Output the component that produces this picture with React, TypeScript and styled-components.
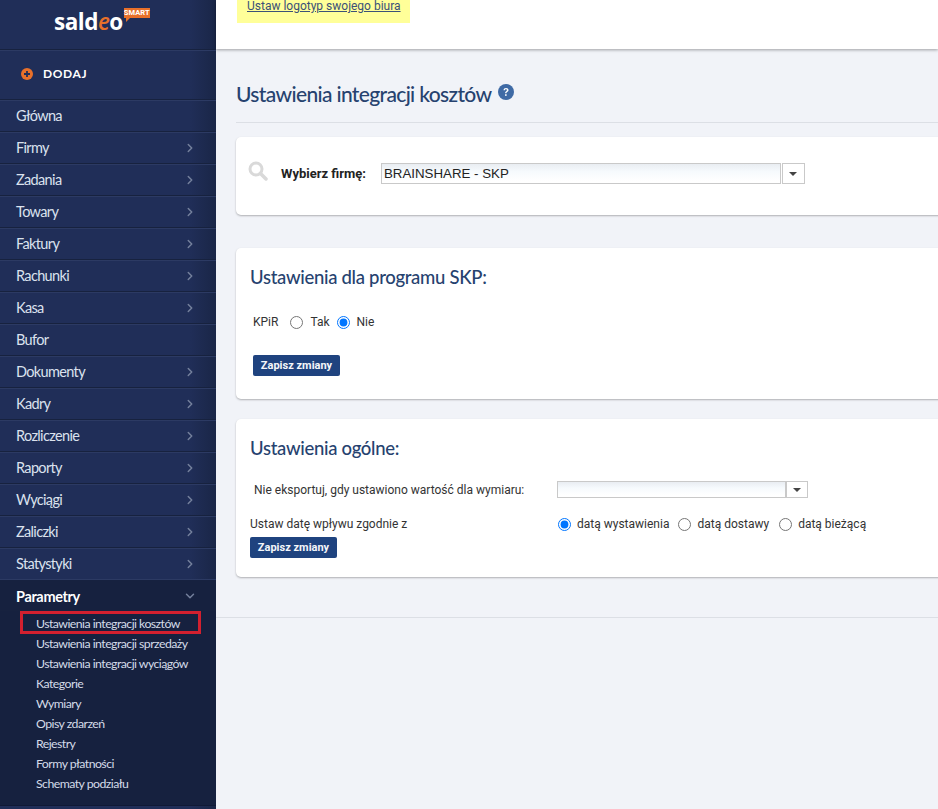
import React from 'react';
import styled, { createGlobalStyle } from 'styled-components';
import { ChevronRight, ChevronDown } from 'lucide-react';

const GlobalStyle = createGlobalStyle`
  html, body {
    margin: 0;
    padding: 0;
    height: 100%;
    overflow: hidden;
    background: #f1f3f8;
  }
  * { box-sizing: border-box; }
`;

const Page = styled.div`
  display: flex;
  width: 938px;
  height: 809px;
  overflow: hidden;
  font-family: Roboto, "Liberation Sans", sans-serif;
`;

const Sidebar = styled.aside`
  flex: 0 0 216px;
  height: 809px;
  display: flex;
  flex-direction: column;
  background: linear-gradient(90deg, #202e58 0%, #202e58 88%, #1a2647 100%);
  color: #dfe5ef;
  font-family: Lato, "Open Sans", sans-serif;
`;

const LogoBar = styled.div`
  height: 50px;
  flex: none;
  display: flex;
  padding: 9px 0 0 54px;
  border-bottom: 1px solid #17223f;
  box-shadow: 0 1px 0 #2c3a63;
`;

const Logo = styled.div`
  display: flex;
  align-items: flex-start;
  font-family: "Open Sans", sans-serif;
  font-weight: 700;
  font-size: 22.5px;
  line-height: 26px;
  letter-spacing: -0.5px;
  color: #fff;
`;

const LogoE = styled.span`
  color: #e8702a;
  font-style: italic;
  font-weight: 600;
`;

const SmartBadge = styled.span`
  position: relative;
  margin: -1px 0 0 1px;
  width: 26px;
  height: 10px;
  background: #e8702a;
  color: #fff;
  font-family: Roboto, sans-serif;
  font-size: 7.5px;
  font-weight: 700;
  line-height: 10px;
  text-align: center;
  letter-spacing: 0.1px;
  &::after {
    content: '';
    position: absolute;
    left: 2px;
    top: 10px;
    border-top: 4px solid #e8702a;
    border-right: 4px solid transparent;
  }
`;

const AddRow = styled.div`
  height: 50px;
  flex: none;
  display: flex;
  align-items: center;
  gap: 10px;
  padding: 0 0 2px 21px;
  border-bottom: 1px solid #17223f;
  color: #fff;
  font-family: Lato, sans-serif;
  font-size: 12px;
  font-weight: 700;
  letter-spacing: 0.6px;
`;

const MenuRow = styled.div<{ $open?: boolean }>`
  height: 32px;
  flex: none;
  display: flex;
  align-items: center;
  justify-content: space-between;
  padding: ${(p) => (p.$open ? '2px 19px 0 16px' : '0 19px 1px 16px')};
  border-top: 1px solid #2c3a63;
  border-bottom: 1px solid #17223f;
  font-size: 14.5px;
  letter-spacing: ${(p) => (p.$open ? '-0.35px' : '-0.65px')};
  color: ${(p) => (p.$open ? '#ffffff' : '#dbe2ee')};
  font-weight: ${(p) => (p.$open ? 700 : 400)};
  svg { color: #74809c; }
`;

const OpenSection = styled.div`
  height: 227px;
  flex: none;
  display: flex;
  flex-direction: column;
  background: #16213f;
  margin-top: -1px;
  border-bottom: 1px solid #111a36;
`;

const SubList = styled.ul`
  list-style: none;
  margin: 2px 0 0;
  padding: 0;
`;

const SubItem = styled.li<{ $active?: boolean }>`
  height: ${(p) => (p.$active ? '23px' : '20px')};
  margin: ${(p) => (p.$active ? '-2px' : '0')} 0 0 20px;
  width: 181px;
  padding-left: ${(p) => (p.$active ? '13px' : '16px')};
  border: ${(p) => (p.$active ? '3px solid #d2202f' : 'none')};
  line-height: ${(p) => (p.$active ? '19px' : '20px')};
  font-size: 12.3px;
  letter-spacing: -0.55px;
  white-space: nowrap;
  color: #d4dbe8;
`;

const Main = styled.main`
  flex: 1;
  min-width: 0;
  display: flex;
  flex-direction: column;
  background: #f1f3f8;
`;

const TopBar = styled.header`
  height: 49px;
  flex: none;
  padding-left: 21px;
  background: #fff;
  box-shadow: 0 1px 3px rgba(0, 0, 0, 0.35);
`;

const LogoLink = styled.a`
  display: block;
  width: 173px;
  height: 23px;
  padding-left: 10px;
  background: #ffff99;
  color: #3b5178;
  font-size: 12px;
  line-height: 12px;
  text-decoration: underline;
  white-space: nowrap;
`;

const Content = styled.div`
  padding: 30px 0 0 20px;
  height: 569px;
  border-bottom: 1px solid #dcdfe5;
  flex: none;
`;

const Title = styled.h1`
  display: flex;
  align-items: center;
  gap: 7px;
  height: 44px;
  margin: 0 0 14px;
  padding-bottom: 14px;
  border-bottom: 1px solid #dcdfe5;
  font-family: Lato, "Open Sans", sans-serif;
  font-size: 21px;
  font-weight: 500;
  line-height: 29px;
  letter-spacing: -0.65px;
  color: #26426f;
  white-space: nowrap;
`;

const HelpGlyph = styled.svg`
  margin-bottom: 4px;
`;

const Card = styled.section<{ $h: number; $gap: number }>`
  height: ${(p) => p.$h}px;
  margin-bottom: ${(p) => p.$gap}px;
  margin-right: -6px;
  background: #fff;
  border-radius: 5px;
  box-shadow: 0 1px 2px rgba(0, 0, 0, 0.28);
`;

const PickerRow = styled.div`
  display: flex;
  align-items: center;
  padding: 26px 0 0 12px;
  font-size: 12px;
`;

const SearchGlyph = styled.svg`
  margin-top: -6px;
`;

const PickerLabel = styled.label`
  margin: 0 15px 0 13px;
  font-weight: 700;
  font-size: 13px;
  color: #222;
  white-space: nowrap;
`;

const ComboInput = styled.div<{ $w: number; $h: number }>`
  width: ${(p) => p.$w}px;
  height: ${(p) => p.$h}px;
  padding: 0 2px;
  border: 1px solid #c9c9c9;
  background: linear-gradient(180deg, #e9edf2 0%, #f6fafd 40%, #ffffff 90%);
  font-family: "Liberation Sans", Arial, sans-serif;
  font-size: 13.3px;
  line-height: 20px;
  color: #222;
  white-space: nowrap;
`;

const ComboArrow = styled.div<{ $w: number; $h: number; $gap: number }>`
  width: ${(p) => p.$w}px;
  height: ${(p) => p.$h}px;
  margin-left: ${(p) => p.$gap}px;
  display: flex;
  align-items: center;
  justify-content: center;
  border: 1px solid #c9c9c9;
  background: #fff;
  &::after {
    content: '';
    border-left: 4px solid transparent;
    border-right: 4px solid transparent;
    border-top: 4px solid #444;
  }
`;

const Combo = styled.div`
  display: flex;
`;

const CardTitle = styled.h2`
  margin: 0;
  padding: 16px 0 0 14px;
  font-family: Lato, "Open Sans", sans-serif;
  font-size: 18.5px;
  font-weight: 500;
  line-height: 26px;
  letter-spacing: -0.3px;
  color: #26426f;
`;

const RadioRow = styled.div`
  display: flex;
  align-items: center;
  font-size: 12px;
  color: #333;
  white-space: nowrap;
`;

const KpirRow = styled(RadioRow)`
  padding: 25px 0 0 17px;
`;

const RadioInput = styled.input.attrs({ type: 'radio' })<{ $ml: number; $mr: number }>`
  width: 13px;
  height: 13px;
  margin: 0 ${(p) => p.$mr}px 0 ${(p) => p.$ml}px;
`;

const SaveButton = styled.button<{ $left: number; $top: number }>`
  display: block;
  width: 87px;
  height: 21px;
  margin: ${(p) => p.$top}px 0 0 ${(p) => p.$left}px;
  padding: 0;
  border: none;
  border-radius: 2px;
  background: #1f437f;
  color: #f4f6fa;
  font-family: Roboto, sans-serif;
  font-size: 11px;
  font-weight: 700;
`;

const SettingsGrid = styled.div`
  display: grid;
  grid-template-columns: 307px 1fr;
  align-items: center;
  padding: 20px 0 0 14px;
  font-size: 12px;
  color: #333;
  row-gap: 19px;
`;

const DimensionLabel = styled.span`
  padding-left: 4px;
  white-space: nowrap;
`;

const menu = [
  'Firmy', 'Zadania', 'Towary', 'Faktury', 'Rachunki', 'Kasa', 'Bufor',
  'Dokumenty', 'Kadry', 'Rozliczenie', 'Raporty', 'Wyciągi', 'Zaliczki', 'Statystyki',
];

const subMenu = [
  'Ustawienia integracji kosztów', 'Ustawienia integracji sprzedaży', 'Ustawienia integracji wyciągów',
  'Kategorie', 'Wymiary', 'Opisy zdarzeń', 'Rejestry', 'Formy płatności', 'Schematy podziału',
];

const PlusIcon = () => (
  <svg width="12" height="12" viewBox="0 0 12 12">
    <circle cx="6" cy="6" r="6" fill="#e8702a" />
    <path d="M6 3v6M3 6h6" stroke="#202e58" strokeWidth="1.8" />
  </svg>
);

const HelpIcon = () => (
  <HelpGlyph width="16" height="16" viewBox="0 0 16 16">
    <circle cx="8" cy="8" r="8" fill="#3f6aa5" />
    <path d="M5.5 6.2C5.6 4.8 6.6 4 8 4c1.5 0 2.5.9 2.5 2.1 0 1-.5 1.4-1.2 1.9-.6.4-.8.6-.8 1.3H7.100c0-1.100.3-1.600 1-2.100.6-.4.9-.7.9-1.100 0-.5-.4-.8-1-.8-.7 0-1 .4-1.100 1z" fill="#fff" />
    <rect x="7.1" y="10.2" width="1.500" height="1.700" fill="#fff" />
  </HelpGlyph>
);

const SearchIcon = () => (
  <SearchGlyph width="20" height="20" viewBox="0 0 20 20" fill="none" stroke="#d9d9d9">
    <circle cx="8" cy="8" r="6" strokeWidth="3" />
    <path d="M12.500 12.500l5.500 5.500" strokeWidth="3.500" strokeLinecap="round" />
  </SearchGlyph>
);

const App: React.FC = () => {
  return (
    <Page>
      <GlobalStyle />
      <Sidebar>
        <LogoBar>
          <Logo>
            sald<LogoE>e</LogoE>o<SmartBadge>SMART</SmartBadge>
          </Logo>
        </LogoBar>
        <AddRow>
          <PlusIcon />
          DODAJ
        </AddRow>
        <MenuRow>Główna</MenuRow>
        {menu.map((item) => (
          <MenuRow key={item}>
            {item}
            {item !== 'Bufor' && <ChevronRight size={14} strokeWidth={2.5} />}
          </MenuRow>
        ))}
        <OpenSection>
          <MenuRow $open>
            Parametry
            <ChevronDown size={14} strokeWidth={2.5} />
          </MenuRow>
          <SubList>
            {subMenu.map((item, index) => (
              <SubItem key={item} $active={index === 0}>{item}</SubItem>
            ))}
          </SubList>
        </OpenSection>
      </Sidebar>
      <Main>
        <TopBar>
          <LogoLink>Ustaw logotyp swojego biura</LogoLink>
        </TopBar>
        <Content>
          <Title>
            Ustawienia integracji kosztów
            <HelpIcon />
          </Title>
          <Card $h={78} $gap={33}>
            <PickerRow>
              <SearchIcon />
              <PickerLabel>Wybierz firmę:</PickerLabel>
              <Combo>
                <ComboInput $w={400} $h={21}>BRAINSHARE - SKP</ComboInput>
                <ComboArrow $w={23} $h={21} $gap={1} />
              </Combo>
            </PickerRow>
          </Card>
          <Card $h={151} $gap={20}>
            <CardTitle>Ustawienia dla programu SKP:</CardTitle>
            <KpirRow>
              KPiR
              <RadioInput $ml={12} $mr={7} name="kpir" />
              Tak
              <RadioInput $ml={7} $mr={7} name="kpir" defaultChecked />
              Nie
            </KpirRow>
            <SaveButton $left={17} $top={26}>Zapisz zmiany</SaveButton>
          </Card>
          <Card $h={158} $gap={0}>
            <CardTitle>Ustawienia ogólne:</CardTitle>
            <SettingsGrid>
              <DimensionLabel>Nie eksportuj, gdy ustawiono wartość dla wymiaru:</DimensionLabel>
              <Combo>
                <ComboInput $w={229} $h={17} />
                <ComboArrow $w={22} $h={17} $gap={0} />
              </Combo>
              <span>Ustaw datę wpływu zgodnie z</span>
              <RadioRow>
                <RadioInput $ml={1} $mr={6} name="date" defaultChecked />
                datą wystawienia
                <RadioInput $ml={9} $mr={6} name="date" />
                datą dostawy
                <RadioInput $ml={10} $mr={6} name="date" />
                datą bieżącą
              </RadioRow>
            </SettingsGrid>
            <SaveButton $left={14} $top={6}>Zapisz zmiany</SaveButton>
          </Card>
        </Content>
      </Main>
    </Page>
  );
};

export default App;
